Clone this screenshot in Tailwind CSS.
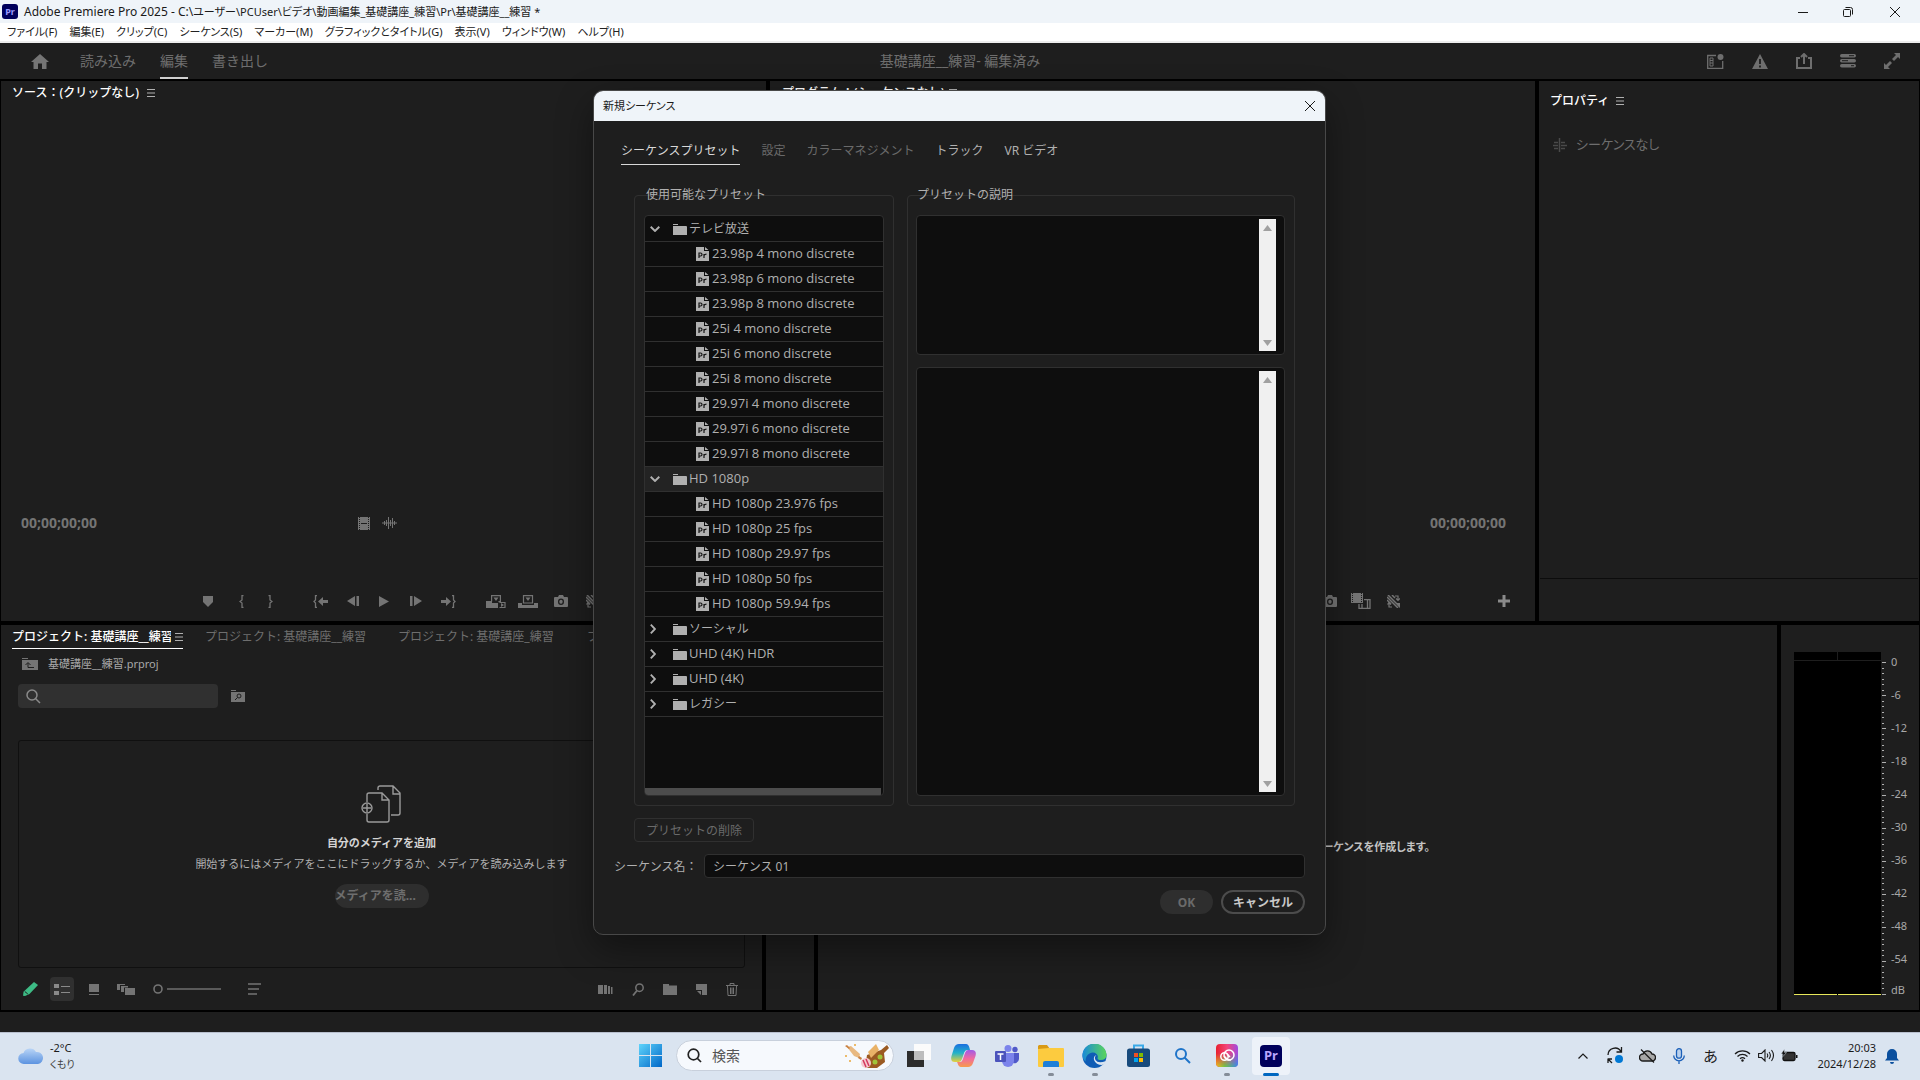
<!DOCTYPE html>
<html lang="ja">
<head>
<meta charset="utf-8">
<title>Adobe Premiere Pro 2025</title>
<script src="https://cdn.jsdelivr.net/npm/@tailwindcss/browser@4"></script>
</head>
<body class="h-screen overflow-hidden bg-[#1e1e1e] font-['Noto_Sans','Noto_Sans_CJK_JP',sans-serif] text-xs text-[#b0b0b0]">
<svg class="hidden">
  <symbol id="burger" viewBox="0 0 8 8"><path d="M0 .5h8M0 4h8M0 7.500h8" stroke="currentColor"/></symbol>
  <symbol id="camera" viewBox="0 0 14 12"><path fill="currentColor" fill-rule="evenodd" d="M1 2h3l1-2h4l1 2h3a1 1 0 0 1 1 1v8a1 1 0 0 1-1 1H1a1 1 0 0 1-1-1V3a1 1 0 0 1 1-1zm6 1.500a3 3.300 0 1 0 0 6.600 3 3.300 0 0 0 0-6.600z"/><ellipse cx="7" cy="6.800" rx="1.700" ry="2" fill="currentColor"/></symbol>
  <symbol id="nofx" viewBox="0 0 13 13"><path d="M0 2l11 11M1 0l12 12M0 5l4 4M5 0l3 3" stroke="currentColor" stroke-width="1.500" fill="none"/><path d="M8 1h3v4M9 3.500l2 2 2-2M5 12H2V8M.5 9.500l1.500-2 2 2" stroke="currentColor" stroke-width="1.200" fill="none"/><path d="M9 8h4v5z" fill="currentColor"/></symbol>
  <symbol id="folder" viewBox="0 0 14 11"><path fill="currentColor" d="M0 0h5v1H0zM0 2h13a1 1 0 0 1 1 1v8H0z"/></symbol>
  <symbol id="prfile" viewBox="0 0 13 14"><path fill="currentColor" d="M0 0h8v4h5v10H0zM9 0l3.500 3H9z"/><path d="M3 11V6h1.500a1.500 1.500 0 0 1 0 3H3M8 11V7M8 8.500q.5-1.300 2.500-1.300" stroke="#151515" stroke-width="1.200" fill="none"/></symbol>
  <symbol id="chevdown" viewBox="0 0 10 6"><path d="M.7.8 5 5 9.300.8" stroke="currentColor" stroke-width="1.900" fill="none"/></symbol>
  <symbol id="chevright" viewBox="0 0 6 10"><path d="M.8.700 5 5 .8 9.300" stroke="currentColor" stroke-width="1.900" fill="none"/></symbol>
</svg>

<div class="relative flex h-full flex-col">
  <!-- Window title -->
  <header class="flex h-[23px] shrink-0 items-center bg-[#eff4f9] text-[#1a1a1a]">
    <span class="ml-[2px] flex h-[15px] w-4 items-center justify-center rounded-[3px] bg-[#00005b] text-[9px] font-bold text-[#9999ff]">Pr</span>
    <h1 class="ml-[6px] whitespace-nowrap text-[11px] [font-feature-settings:'palt']"><span class="text-xs">Adobe Premiere Pro 2025 - C:\</span>ユーザー\PCUser\ビデオ\動画編集_基礎講座_練習\Pr\基礎講座__練習 *</h1>
    <div class="ml-auto flex h-full">
      <button aria-label="最小化" class="flex w-[45px] items-center justify-center"><svg width="10" height="10"><path d="M0 5.500h10" stroke="currentColor"/></svg></button>
      <button aria-label="元に戻す" class="flex w-[45px] items-center justify-center"><svg width="10" height="10" fill="none" stroke="currentColor"><rect x=".5" y="2.500" width="7" height="7" rx="1"/><path d="M2.500 .5h5a2 2 0 0 1 2 2v5"/></svg></button>
      <button aria-label="閉じる" class="flex w-[50px] items-center justify-center"><svg width="10" height="10"><path d="M0 0l10 10M10 0L0 10" stroke="currentColor"/></svg></button>
    </div>
  </header>
  <nav class="flex h-5 shrink-0 items-center gap-3 border-b-2 border-[#ededed] bg-white pl-[7px] pt-px text-[11px] text-[#222] [font-feature-settings:'palt']">
    <button>ファイル(F)</button><button>編集(E)</button><button>クリップ(C)</button><button>シーケンス(S)</button><button>マーカー(M)</button><button>グラフィックとタイトル(G)</button><button>表示(V)</button><button>ウィンドウ(W)</button><button>ヘルプ(H)</button>
  </nav>

  <!-- Workspace bar -->
  <div class="grid h-9 shrink-0 grid-cols-[1fr_auto_1fr] items-stretch text-sm leading-5 text-[#6e6e6e]">
    <div class="flex items-center pl-[31px]">
      <button aria-label="ホーム" class="mr-[31px]"><svg width="18" height="15" class="block"><path fill="#757575" d="M9 0l9 8h-2.500v7H11V9.500H7V15H2.500V8H0z"/></svg></button>
      <button class="mr-6">読み込み</button>
      <button class="mr-6 h-full border-b-2 border-[#d0d0d0] pt-[2px]">編集</button>
      <button>書き出し</button>
    </div>
    <div class="flex items-center">基礎講座__練習- 編集済み</div>
    <div class="flex items-center justify-end gap-7 pr-5">
      <button aria-label="ワークスペース"><svg width="17" height="15" class="block"><path d="M9 1.500H.7v12.800h15V7" stroke="currentColor" stroke-width="1.300" fill="none"/><circle cx="13.500" cy="3" r="3" fill="currentColor"/><path d="M3 4h3v8H3zM3 6.500h3M3 9h3" stroke="currentColor" fill="none"/></svg></button>
      <button aria-label="警告"><svg width="16" height="15" class="block"><path d="M8 0l8 15H0z" fill="currentColor"/><path d="M8 5v5M8 11.500v2" stroke="#1e1e1e" stroke-width="1.800"/></svg></button>
      <button aria-label="書き出し"><svg width="16" height="16" class="block" fill="none" stroke="currentColor" stroke-width="2"><path d="M4 5H1v10h14V5h-3M8 11V1M5 4l3-3 3 3"/></svg></button>
      <button aria-label="進行状況"><svg width="16" height="14" class="block"><rect width="16" height="3.500" rx="1.700" fill="currentColor"/><rect y="5" width="16" height="3.500" rx="1.700" fill="currentColor"/><rect y="10" width="16" height="3.500" rx="1.700" fill="currentColor"/><path d="M9 1.700h5M2 6.700h6M11 11.700h3" stroke="#1e1e1e"/></svg></button>
      <button aria-label="全画面"><svg width="16" height="16" class="block"><path d="M10 0h6v6l-2-2-4 4-2-2 4-4zM0 16v-6l2 2 4-4 2 2-4 4 2 2z" fill="currentColor"/></svg></button>
    </div>
  </div>

  <!-- Panels -->
  <main class="grid min-h-0 flex-1 grid-rows-[540fr_385fr] gap-1 bg-black px-px py-[2px]">
    <div class="grid min-h-0 grid-cols-[765fr_765fr_380fr] gap-1">
      <section class="flex min-w-0 flex-col bg-[#1e1e1e]">
        <h2 class="flex h-6 items-center gap-1 pl-[11px] font-medium text-white"><span class="w-[131px] overflow-hidden whitespace-nowrap">ソース：(クリップなし)</span><svg class="size-2 text-[#b0b0b0]"><use href="#burger"/></svg></h2>
        <div class="mt-auto flex h-6 items-center pl-5 text-[#747474]">
          <span class="w-[337px] text-sm font-bold">00;00;00;00</span>
          <svg width="12" height="13"><path fill="currentColor" d="M0 0h12v13H0z"/><path d="M1.500 0v13M10.500 0v13" stroke="#1e1e1e" stroke-dasharray="1 1"/><path d="M3 6.500h6" stroke="#1e1e1e"/></svg>
          <svg width="15" height="12" class="ml-3"><path d="M0 6h15M2.500 4v4M4.500 3v6M6.500 0v12M8.500 3v6M10.500 1v10M12.500 4v4" stroke="currentColor"/></svg>
        </div>
        <div class="mb-[5px] mt-[51px] flex h-[30px] items-center pl-[202px] text-[#747474]">
          <button aria-label="マーカー" class="mr-[26px]"><svg width="10" height="11" class="block"><path fill="currentColor" d="M0 0h10v6l-5 5-5-5z"/></svg></button>
          <button aria-label="イン" class="mr-6"><svg width="5" height="13" class="block"><path d="M4.500.5H3V5L1 6.500 3 8v4.500h1.500" fill="none" stroke="currentColor" stroke-width="1.300"/></svg></button>
          <button aria-label="アウト" class="mr-10"><svg width="5" height="13" class="block"><path d="M.5.5H2V5l2 1.500L2 8v4.500H.5" fill="none" stroke="currentColor" stroke-width="1.300"/></svg></button>
          <button aria-label="インへ移動" class="mr-[19px]"><svg width="15" height="13" class="block"><path d="M4 .5H2.500V5L1 6.500 2.500 8v4.500H4" fill="none" stroke="currentColor" stroke-width="1.300"/><path d="M5 6.500L10 2v3h5v3h-5v3z" fill="currentColor"/></svg></button>
          <button aria-label="前のフレーム" class="mr-5"><svg width="12" height="10" class="block"><path d="M8 0v10L0 5zM9.500 0H12v10H9.500z" fill="currentColor"/></svg></button>
          <button aria-label="再生" class="mr-[21px]"><svg width="10" height="11" class="block"><path d="M0 0l10 5.500L0 11z" fill="currentColor"/></svg></button>
          <button aria-label="次のフレーム" class="mr-[19px]"><svg width="12" height="10" class="block"><path d="M0 0h2.500v10H0zM4 0l8 5-8 5z" fill="currentColor"/></svg></button>
          <button aria-label="アウトへ移動" class="mr-[30px]"><svg width="15" height="13" class="block"><path d="M11 .5h1.500V5L14 6.500 12.500 8v4.500H11" fill="none" stroke="currentColor" stroke-width="1.300"/><path d="M10 6.500L5 2v3H0v3h5v3z" fill="currentColor"/></svg></button>
          <button aria-label="インサート" class="mr-3"><svg width="20" height="13" class="block"><path d="M0 6h6v2h6v5H0z" fill="currentColor"/><path d="M5.600 6.500V.6h8.800v6h-2" fill="none" stroke="currentColor" stroke-width="1.200"/><path d="M7.500 2.500h5L10 6z" fill="currentColor"/><path d="M13.500 7.500H19v5h-5.500" fill="none" stroke="currentColor" stroke-width="1.200"/><path d="M15 8v4l3-2z" fill="currentColor"/></svg></button>
          <button aria-label="上書き" class="mr-4"><svg width="20" height="13" class="block"><path d="M0 8h4v2h12V8h4v5H0z" fill="currentColor"/><path d="M5.500 8V.6h9V8z" fill="none" stroke="currentColor" stroke-width="1.200"/><path d="M7.500 2.500h5L10 6z" fill="currentColor"/></svg></button>
          <button aria-label="フレームを書き出し" class="mr-[18px]"><svg class="block h-3 w-[14px]"><use href="#camera"/></svg></button>
          <button aria-label="プロキシ"><svg class="block size-[13px]"><use href="#nofx"/></svg></button>
        </div>
      </section>
      <section class="flex min-w-0 flex-col bg-[#1e1e1e]">
        <h2 class="flex h-6 items-center gap-1 pl-3 font-medium text-white">プログラム：(シーケンスなし)<svg class="size-2 text-[#b0b0b0]"><use href="#burger"/></svg></h2>
        <div class="mt-auto flex h-6 items-center justify-end pr-[29px] text-sm font-bold text-[#747474]">00;00;00;00</div>
        <div class="mb-[5px] mt-[51px] flex h-[30px] items-center justify-end pr-[25px] text-[#747474]">
          <button aria-label="フレームを書き出し" class="mr-[14px]"><svg class="block h-3 w-[14px]"><use href="#camera"/></svg></button>
          <button aria-label="比較表示" class="mr-4"><svg width="20" height="16" class="block"><path d="M0 0h12v10H0z" fill="currentColor"/><path d="M1.500 0v10M10.500 0v10" stroke="#1e1e1e" stroke-dasharray="1 1"/><path d="M8 11v4.300h11V6.700h-6M11 11v4M16.500 7v8" fill="none" stroke="currentColor" stroke-width="1.300"/></svg></button>
          <button aria-label="プロキシ" class="mr-[98px]"><svg class="block size-[13px]"><use href="#nofx"/></svg></button>
          <button aria-label="ボタンエディター"><svg width="12" height="12" class="block"><path d="M6 0v12M0 6h12" stroke="#8a8a8a" stroke-width="3"/></svg></button>
        </div>
      </section>
      <section class="flex min-w-0 flex-col bg-[#1e1e1e]">
        <h2 class="mt-2 flex h-6 items-center gap-[7px] pl-[11px] font-medium text-white">プロパティ<svg class="size-2 text-[#b0b0b0]"><use href="#burger"/></svg></h2>
        <p class="mt-5 flex h-6 items-center gap-[9px] pl-[14px] text-[#6e6e6e]"><svg width="14" height="14" stroke="#4a4a4a" fill="none"><path d="M6.500 0v14M1 4.500h4M0 7.500h5M1 10.500h4M8 4.500h4M8 7.500h6M8 10.500h4" stroke-width="1.500"/></svg><span class="text-[13px] [font-feature-settings:'palt']">シーケンスなし</span></p>
        <div class="mx-px mb-[42px] mt-auto border-t border-[#0c0c0c]"></div>
      </section>
    </div>

    <div class="grid min-h-0 grid-cols-[761fr_48px_959fr_138px] gap-1">
      <section class="flex min-w-0 flex-col overflow-hidden bg-[#1e1e1e]">
        <div class="flex h-6 shrink-0 items-stretch whitespace-nowrap pl-[11px] text-[#6e6e6e]">
          <button class="mr-[22px] flex w-[171px] items-center gap-1 border-b border-white font-medium text-white"><span class="w-[159px] overflow-hidden text-left">プロジェクト: 基礎講座__練習</span><svg class="size-2 shrink-0 text-[#b0b0b0]"><use href="#burger"/></svg></button>
          <button class="w-[193px] shrink-0 text-left">プロジェクト: 基礎講座__練習</button>
          <button class="w-[189px] shrink-0 text-left">プロジェクト: 基礎講座_練習</button>
          <button class="shrink-0">プ</button>
        </div>
        <div class="mt-[6px] flex h-[18px] shrink-0 items-center gap-[10px] pl-[21px] text-[11px] text-[#a8a8a8]"><svg width="16" height="12"><path fill="#747474" d="M0 0h6v1H0zM0 2h16v10H0z"/><path d="M12 9.500H6V5M3.500 7L6 4.500 8.500 7" stroke="#1e1e1e" fill="none"/></svg><span>基礎講座__練習.prproj</span></div>
        <div class="mt-[11px] flex h-6 shrink-0 items-center pl-[17px]">
          <label class="flex h-6 w-[200px] items-center rounded bg-[#303030] pl-2"><svg width="15" height="15" fill="none" stroke="#8a8a8a" stroke-width="1.500"><circle cx="6" cy="6" r="5"/><path d="M9.500 9.500L14 14"/></svg><input aria-label="検索" class="w-40 bg-transparent outline-none"></label>
          <button aria-label="ビンを検索" class="ml-[13px]"><svg width="14" height="12" class="block"><path fill="#747474" d="M0 0h5v1H0zM0 2h14v10H0z"/><circle cx="8" cy="6" r="2" fill="none" stroke="#1e1e1e"/><path d="M6.500 7.500L4 10" stroke="#1e1e1e"/></svg></button>
        </div>
        <div class="mx-[17px] mt-8 flex min-h-0 flex-1 flex-col items-center rounded-[3px] border border-[#101010] pt-11">
          <svg width="42" height="38" fill="none" stroke="#9a9a9a" stroke-width="1.400"><path d="M6 17V10a2 2 0 0 1 2-2h13l7 7v20a2 2 0 0 1-2 2H8a2 2 0 0 1-2-2v-6M21 8v7h7M17 5V3a2 2 0 0 1 2-2h13l7 7v20a2 2 0 0 1-2 2h-7M32 1v8h7"/><circle cx="6" cy="23" r="5"/><path d="M2 23h8M6 19v8"/></svg>
          <h3 class="mt-3 text-[11px] font-bold leading-4 text-[#d4d4d4]">自分のメディアを追加</h3>
          <p class="mt-[5px] whitespace-nowrap text-[11px] leading-4 text-[#b0b0b0]">開始するにはメディアをここにドラッグするか、メディアを読み込みします</p>
          <button class="mt-3 flex h-6 w-[94px] items-center rounded-full bg-[#2e2e2e] font-bold text-[#6e6e6e]">メディアを読...</button>
        </div>
        <div class="flex h-[42px] shrink-0 items-center pl-[22px] pr-6 text-[#747474]">
          <svg width="15" height="14" class="mr-3"><path fill="#3dbb85" d="M11 0l4 3-8.500 9L2 14l-2-.3.500-4z"/><path d="M1.800 9.500l3 2.500" stroke="#1e1e1e"/></svg>
          <button aria-label="リスト表示" class="mr-[15px] flex h-6 w-6 items-center justify-center rounded bg-[#303030]"><svg width="16" height="11"><path fill="#8a8a8a" d="M0 0h5v4H0zM0 7h5v4H0zM7 2h9v1H7zM7 8h9v1H7z"/></svg></button>
          <button aria-label="アイコン表示" class="mr-[18px]"><svg width="10" height="11" class="block"><path fill="currentColor" d="M0 0h10v8H0zM0 10h10v1H0z"/></svg></button>
          <button aria-label="フリーフォーム表示" class="mr-[18px]"><svg width="18" height="11" class="block"><path fill="currentColor" d="M0 0h8v1H3v5H0zM4 2h7v1.500H7V8H4zM8 4h10v7H8z"/></svg></button>
          <svg width="68" height="12" class="mr-[27px]" fill="none" stroke="currentColor"><circle cx="5" cy="6" r="4" stroke-width="1.600"/><path d="M14 6h54" stroke="#5a5a5a" stroke-width="2"/></svg>
          <button aria-label="並べ替え"><svg width="13" height="12" class="block"><path d="M0 1h13M0 6h11M0 11h9" stroke="currentColor" stroke-width="1.500"/></svg></button>
          <div class="ml-auto flex items-center gap-[19px]">
            <button aria-label="自動シーケンス"><svg width="15" height="9" class="block"><path fill="currentColor" d="M0 0h5v9H0zM6 0h3v9H6zM10 1h2v8h-2zM13 2h1.500v7H13z"/></svg></button>
            <button aria-label="検索"><svg width="12" height="13" class="block"><circle cx="7.500" cy="4.700" r="3.700" fill="none" stroke="currentColor" stroke-width="1.500"/><path d="M5 7.500L1 12.500" stroke="currentColor" stroke-width="1.800"/></svg></button>
            <button aria-label="新規ビン"><svg width="14" height="11" class="block"><path fill="currentColor" d="M0 0h6v1.500h8V11H0z"/></svg></button>
            <button aria-label="新規項目"><svg width="11" height="11" class="block"><path fill="currentColor" d="M0 0h11v11H6V6H0zM1 7h4v4z"/></svg></button>
            <button aria-label="消去"><svg width="12" height="13" class="block"><path d="M0 2.500h12M4 2V.5h4V2M1.500 3l.500 9.500h8l.500-9.500M4.500 4.500v6.500M6 4.500v6.500M7.500 4.500v6.500" fill="none" stroke="currentColor"/></svg></button>
          </div>
        </div>
      </section>
      <section class="bg-[#1e1e1e]"></section>
      <section class="flex min-w-0 items-center justify-center bg-[#1e1e1e] pl-[5px] pt-[60px] text-[11px] font-bold text-[#c4c4c4]"><p class="[font-feature-settings:'palt']">ここにメディアをドロップして、シーケンスを作成します。</p></section>
      <section class="flex min-w-0 bg-[#1e1e1e] pb-[15px] pl-[13px] pt-[27px] text-[11px] text-[#a8a8a8]">
        <div class="grid w-[87px] shrink-0 grid-cols-2 grid-rows-[8px_1fr] gap-px">
          <div class="bg-black"></div><div class="bg-black"></div>
          <div class="col-span-2 grid grid-cols-2 gap-x-px bg-black"><i class="self-end border-b border-[#e8e85a]"></i><i class="self-end border-b border-[#e8e85a]"></i></div>
        </div>
        <svg id="ticks" width="5" height="343" class="ml-px shrink-0" stroke="#b0b0b0"></svg>
        <ol id="levels" class="ml-1 flex flex-col"></ol>
      </section>
    </div>
  </main>
  <div class="h-5 shrink-0"></div>

  <!-- Taskbar -->
  <footer class="relative flex h-12 shrink-0 items-center border-t border-[#b8bfce] bg-[#dae4f0] pb-[2px] text-[#1b1b1b]">
    <button class="flex items-center gap-[6px] pl-[18px] text-left"><svg width="26" height="18"><defs><linearGradient id="cl" x2="0" y2="1"><stop stop-color="#b8d4f6"/><stop offset="1" stop-color="#5c93e0"/></linearGradient></defs><path fill="url(#cl)" d="M6 17a5.500 5.500 0 0 1-.5-11A7 7 0 0 1 18 5a6 6 0 0 1 2 12z"/></svg><span class="text-[11px] leading-4">-2°C<br><span class="text-[10px] text-[#444] [font-feature-settings:'palt']">くもり</span></span></button>
    <div class="absolute inset-x-0 mx-auto flex w-[664px] items-center pl-[11px]">
      <button aria-label="スタート" class="mr-[14px]"><svg width="23" height="23" class="block"><defs><linearGradient id="wn" x2="1" y2="1"><stop stop-color="#5fd4fb"/><stop offset="1" stop-color="#0067c8"/></linearGradient></defs><path fill="url(#wn)" d="M0 0h11v11H0zM12 0h11v11H12zM0 12h11v11H0zM12 12h11v11H12z"/></svg></button>
      <label class="flex h-[31px] w-[218px] items-center rounded-full border border-[#c8d0dc] bg-[#f6f9fd] pl-[10px]">
        <svg width="15" height="15" fill="none" stroke="#222" stroke-width="1.700"><circle cx="6.500" cy="6.500" r="5.300"/><path d="M10.500 10.500L14 14"/></svg>
        <input aria-label="検索" placeholder="検索" class="ml-[10px] w-[120px] bg-transparent text-sm outline-none placeholder:text-[#555]">
        <svg width="44" height="26" class="ml-auto mr-1"><path fill="#9a5a22" d="M22 12l14-5 6-5 2 3-5 5 1 9-8 6H20z"/><path fill="#e9b267" d="M23 9l8-8 3 6-8 8z"/><path fill="#e8b982" d="M2 4l4-1 9 8-1 4-5-2z"/><path fill="#c98142" d="M0 3l2-1 3 3-1 1zM14 13l3 2-1 2-3-2z"/><circle cx="21" cy="20" r="5" fill="#f4c9cf"/><path d="M18 17l3 7M21 16l3 7" stroke="#d4385c" stroke-width="1.500"/><circle cx="30" cy="19" r="2.500" fill="#9fc43a"/><circle cx="35" cy="14" r="2.500" fill="#9fc43a"/><circle cx="10" cy="2" r="1" fill="#e9a63b"/><circle cx="5" cy="18" r="1" fill="#e9a63b"/><circle cx="1" cy="13" r="1" fill="#e9a63b"/></svg>
      </label>
      <button aria-label="タスクビュー" class="ml-[13px]"><svg width="24" height="24" class="block"><path fill="#2c2c2c" d="M0 7h17v16H0z"/><path fill="#fbfbfb" d="M7 0h17v16H7z"/><path fill="#bdbdbd" d="M7 7h10v9H7z"/></svg></button>
      <button aria-label="Copilot" class="ml-5"><svg width="25" height="23" class="block"><defs><linearGradient id="ca" x2="0" y2="1"><stop stop-color="#1a6fe0"/><stop offset=".5" stop-color="#22b2c8"/><stop offset="1" stop-color="#e8cf3a"/></linearGradient><linearGradient id="cb" x2="0" y2="1"><stop stop-color="#a05ae8"/><stop offset=".5" stop-color="#f06aa0"/><stop offset="1" stop-color="#f79a4a"/></linearGradient></defs><path fill="url(#ca)" d="M8 0h7q2.500 0 3.500 4l.500 2h-3q-2 0-2.800 2.500L11 15q-1 3-3 3H4q-5 0-3.500-6L3 4q1.300-4 5-4z"/><path fill="url(#cb)" d="M17 23h-7q-2.500 0-3.500-4l-.500-1h3q2 0 2.800-2.500L14 9q1-3 3-3h4q5 0 3.500 6L22 19q-1.300 4-5 4z"/></svg></button>
      <button aria-label="Teams" class="ml-[19px]"><svg width="24" height="22" class="block"><circle cx="20" cy="4.500" r="2.700" fill="#5059c9"/><circle cx="13" cy="3.500" r="3.500" fill="#7b83eb"/><path fill="#5059c9" d="M16 8h8v6a4.500 4.500 0 0 1-7 3.500z"/><path fill="#7b83eb" d="M7 8h12v8a6 6 0 0 1-12 0z"/><rect y="6" width="11" height="11" rx="1" fill="#4b53bc"/><path d="M2.500 9h6M5.500 9v6" stroke="#fff" stroke-width="1.500"/></svg></button>
      <button aria-label="エクスプローラー" class="ml-[19px]"><svg width="26" height="22" class="block"><path fill="#d99a16" d="M1 0h8l3 4H0V1z"/><path fill="#fccb3f" d="M0 4l11-1h14a1 1 0 0 1 1 1v17a1 1 0 0 1-1 1H1a1 1 0 0 1-1-1z"/><path fill="#1d7fd8" d="M5 22v-4a2 2 0 0 1 2-2h12a2 2 0 0 1 2 2v4z"/></svg></button>
      <button aria-label="Edge" class="ml-[18px]"><svg width="25" height="24" class="block"><defs><linearGradient id="ed" x2="1"><stop stop-color="#1a8ad8"/><stop offset="1" stop-color="#5ad65a"/></linearGradient></defs><circle cx="12.500" cy="12" r="12" fill="#0f5cb5"/><path fill="url(#ed)" d="M.5 12a12 12 0 0 1 24-1q0 5-6 5-3 0-3-2 1-2-1-4-3-2.500-7-.500-4 2-4 8Q.5 15 .5 12z"/><path fill="#dae4f0" d="M14.500 11q-2.500 2-1 5 2.500 4 10.500 1-1 3-4 4-6 0-8-5-.8-4 2.500-5z"/></svg></button>
      <button aria-label="Store" class="ml-5"><svg width="23" height="23" class="block"><path d="M7 5V1.500h9V5" fill="none" stroke="#3aa9e8" stroke-width="2"/><rect y="4.500" width="23" height="18.500" rx="2.500" fill="#174a7c"/><path fill="#f05022" d="M7 9h4v4H7z"/><path fill="#7fba00" d="M12 9h4v4h-4z"/><path fill="#00a4ef" d="M7 14h4v4H7z"/><path fill="#ffb900" d="M12 14h4v4h-4z"/></svg></button>
      <button aria-label="検索アプリ" class="ml-6"><svg width="17" height="17" class="block" fill="none" stroke="#1f74c9" stroke-width="2"><circle cx="7" cy="7" r="5"/><path d="M10.500 10.500L16 16"/></svg></button>
      <button aria-label="Creative Cloud" class="ml-[25px]"><svg width="22" height="23" class="block"><defs><linearGradient id="cc1"><stop stop-color="#e8202f"/><stop offset=".5" stop-color="#f2457a"/><stop offset="1" stop-color="#a04ae0"/></linearGradient><linearGradient id="cc2"><stop stop-color="#f6c21c"/><stop offset=".4" stop-color="#6cc644"/><stop offset="1" stop-color="#2f8cf0"/></linearGradient><linearGradient id="cc3" x2="0" y2="1"><stop offset=".4" stop-color="#fff" stop-opacity="0"/><stop offset="1" stop-color="#fff"/></linearGradient><mask id="ccm"><rect width="22" height="23" fill="url(#cc3)"/></mask></defs><rect width="22" height="23" rx="4" fill="url(#cc1)"/><rect width="22" height="23" rx="4" fill="url(#cc2)" mask="url(#ccm)"/><g fill="none" stroke="#fff" stroke-width="1.500"><circle cx="13" cy="11" r="5"/><circle cx="8.500" cy="12.500" r="3.700"/><path d="M8 12l4 4h3M11 10l3 3"/></g></svg></button>
      <button aria-label="Premiere Pro" class="ml-[14px] flex h-[38px] w-[38px] shrink-0 items-center justify-center rounded bg-[#edf2f9]"><span class="flex h-[22px] w-[22px] items-center justify-center rounded bg-[#00005b] text-[13px] font-bold leading-none text-[#b9a6ff]">Pr</span></button>
    </div>
    <div class="absolute inset-x-0 bottom-1 mx-auto w-[664px]">
      <i class="absolute bottom-0 left-[420px] h-[3px] w-[6px] rounded-full bg-[#848c98]"></i>
      <i class="absolute bottom-0 left-[464px] h-[3px] w-[6px] rounded-full bg-[#848c98]"></i>
      <i class="absolute bottom-0 left-[596px] h-[3px] w-[6px] rounded-full bg-[#848c98]"></i>
      <i class="absolute bottom-0 left-[635px] h-[3px] w-4 rounded-full bg-[#0067c0]"></i>
    </div>
    <div class="ml-auto flex items-center pr-[21px]">
      <svg width="10" height="6" class="mr-[19px]" fill="none" stroke="currentColor" stroke-width="1.200"><path d="M.5 5.500L5 1l4.500 4.500"/></svg>
      <svg width="17" height="17" class="mr-[15px]" fill="none" stroke="currentColor" stroke-width="1.300"><path d="M1 8a7 7 0 0 1 13-3.500M14.500 0v5h-5M1 12h4M1 11.500V16M1 12l4 4"/><circle cx="12" cy="12" r="4" fill="#0078d4" stroke="none"/></svg>
      <svg width="17" height="14" class="mr-[17px]" fill="#a8a8a8" stroke="currentColor" stroke-width="1.300"><path d="M4 12a3.500 3.500 0 0 1 0-7 4.800 4.800 0 0 1 9 0 3.500 3.500 0 0 1 0 7z"/><path d="M2 .5l13 13"/></svg>
      <svg width="12" height="16" class="mr-[18px]" fill="none" stroke="#1a5fb8" stroke-width="1.300"><rect x="3.500" y=".7" width="5" height="9.500" rx="2.500" fill="#b9d0ec"/><path d="M.7 7.500a5.300 5.300 0 0 0 10.600 0M6 13v3"/></svg>
      <span class="mr-4 text-[15px]">あ</span>
      <svg width="17" height="13" class="mr-[7px]" fill="none" stroke="currentColor" stroke-width="1.200"><path d="M1 5a10.500 10.500 0 0 1 15 0M3.500 7.500a7 7 0 0 1 10 0M6 9.800a3.600 3.600 0 0 1 5 0"/><circle cx="8.500" cy="11.500" r="1.200" fill="currentColor" stroke="none"/></svg>
      <svg width="17" height="13" class="mr-[6px]" fill="none" stroke="currentColor" stroke-width="1.100"><path d="M.6 4.500h3L7 1v11L3.600 8.500h-3zM9 4.500q1.500 2 0 4M11 3q2.800 3.500 0 7M13.500 1q4 5.500 0 11"/></svg>
      <svg width="17" height="14" class="mr-[6px]"><rect x="2" y="3.500" width="12" height="8" rx="1.500" fill="#333" stroke="#111" stroke-width="1.300"/><path d="M15 6h1.500v3H15z" fill="#111"/><path d="M3.500 0L0 5h2L1 8.500 5.500 3.500h-2z" fill="#111" stroke="#dae4f0" stroke-width=".5"/></svg>
      <span class="w-[72px] text-right text-[11px] leading-4">20:03<br>2024/12/28</span>
      <svg width="14" height="16" class="ml-[9px]"><path fill="#0a4f9e" d="M2 6a5 5 0 0 1 10 0v4l2 2.500H0L2 10zM5 14h4a2 2 0 0 1-4 0z"/></svg>
    </div>
  </footer>

  <!-- New sequence dialog -->
  <section role="dialog" aria-labelledby="dlg" class="absolute left-[calc(50%-367px)] top-[90px] w-[733px] overflow-hidden rounded-[10px] border border-[#484848] bg-[#1e1e1e] shadow-[0_14px_36px_rgba(0,0,0,0.4)]">
    <div class="flex h-[30px] items-center bg-[#eff4f9] pl-[9px] pr-[10px] text-[#1a1a1a]">
      <h2 id="dlg" class="text-[11px] [font-feature-settings:'palt']">新規シーケンス</h2>
      <button aria-label="閉じる" class="ml-auto"><svg width="10" height="10" class="block"><path d="M0 0l10 10M10 0L0 10" stroke="currentColor"/></svg></button>
    </div>
    <nav class="flex items-start gap-[21px] pl-[27px] pt-[21px] leading-[18px]">
      <button class="border-b border-[#d8d8d8] pb-1 text-[#d8d8d8]">シーケンスプリセット</button>
      <button disabled class="text-[#6a6a6a]">設定</button>
      <button disabled class="text-[#6a6a6a]">カラーマネジメント</button>
      <button>トラック</button>
      <button>VR ビデオ</button>
    </nav>
    <div class="mt-[30px] flex gap-[13px] pl-10 pr-[30px]">
      <section class="flex w-[260px] flex-col rounded border border-[#303030] px-[9px] pb-[9px]">
        <h3 class="-mt-[10px] h-[18px] pl-[2px] leading-[18px]">使用可能なプリセット</h3>
        <div class="mt-[11px] flex h-[581px] flex-col overflow-hidden rounded border border-[#303030] bg-[#0e0e0e]">
          <ul id="presets" role="tree" class="pt-px"></ul>
          <div class="mr-[2px] mt-auto h-[7px] bg-[#4c4c4c]"></div>
        </div>
      </section>
      <section class="flex flex-1 flex-col rounded border border-[#303030] pb-[9px] pl-2 pr-[9px]">
        <h3 class="-mt-[10px] h-[18px] pl-px leading-[18px]">プリセットの説明</h3>
        <div class="mt-[11px] flex h-[140px] justify-end rounded border border-[#303030] bg-[#0e0e0e] py-[3px] pr-2">
          <div class="flex w-[17px] flex-col items-center justify-between bg-[#f0f0f0] pb-[5px] pt-[6px] text-[#a0a0a0]"><svg width="9" height="6"><path d="M4.500 0L9 6H0z" fill="currentColor"/></svg><svg width="9" height="6"><path d="M0 0h9L4.500 6z" fill="currentColor"/></svg></div>
        </div>
        <div class="mt-3 flex flex-1 justify-end rounded border border-[#303030] bg-[#0e0e0e] py-[3px] pr-2">
          <div class="flex w-[17px] flex-col items-center justify-between bg-[#f0f0f0] pb-[5px] pt-[6px] text-[#a0a0a0]"><svg width="9" height="6"><path d="M4.500 0L9 6H0z" fill="currentColor"/></svg><svg width="9" height="6"><path d="M0 0h9L4.500 6z" fill="currentColor"/></svg></div>
        </div>
      </section>
    </div>
    <button disabled class="ml-10 mt-3 block h-6 w-[120px] rounded border border-[#303030] pt-px text-[#6a6a6a]">プリセットの削除</button>
    <div class="mt-3 flex h-6 items-center pl-5 pr-5">
      <label for="seq" class="w-[90px] whitespace-nowrap pt-[2px]">シーケンス名：</label>
      <input id="seq" value="シーケンス 01" class="h-6 min-w-0 flex-1 rounded border border-[#303030] bg-[#0e0e0e] px-2 outline-none">
    </div>
    <div class="mb-5 mt-3 flex justify-end gap-2 pr-5 font-bold">
      <button disabled class="h-6 w-[53px] rounded-full bg-[#2e2e2e] pt-px text-[#6a6a6a]">OK</button>
      <button class="h-6 w-[84px] rounded-full border-2 border-[#4c4c4c] pt-px text-[#c8c8c8]">キャンセル</button>
    </div>
  </section>
</div>

<script>
  const tree = [
    ['テレビ放送', ['23.98p 4 mono discrete', '23.98p 6 mono discrete', '23.98p 8 mono discrete', '25i 4 mono discrete', '25i 6 mono discrete', '25i 8 mono discrete', '29.97i 4 mono discrete', '29.97i 6 mono discrete', '29.97i 8 mono discrete']],
    ['HD 1080p', ['HD 1080p 23.976 fps', 'HD 1080p 25 fps', 'HD 1080p 29.97 fps', 'HD 1080p 50 fps', 'HD 1080p 59.94 fps']],
    ['ソーシャル', []], ['UHD (4K) HDR', []], ['UHD (4K)', []], ['レガシー', []]
  ];
  document.getElementById('presets').innerHTML = tree.map(([name, items]) => {
    const chev = items.length
      ? '<svg class="mr-[13px] h-[6px] w-[10px]"><use href="#chevdown"/></svg>'
      : '<svg class="mr-[17px] h-[10px] w-[6px]"><use href="#chevright"/></svg>';
    const bg = name === 'HD 1080p' ? 'bg-[#232323]' : '';
    const face = /^[A-Z]/.test(name) ? "font-['Open_Sans',sans-serif] text-[13px]" : 'text-xs';
    return `<li role="treeitem" class="flex h-[25px] items-center border-b border-[#303030] pl-[5px] ${bg}">${chev}<svg class="mr-[2px] h-[11px] w-[14px]"><use href="#folder"/></svg><span class="${face}">${name}</span></li>` +
      items.map(t => `<li role="treeitem" class="flex h-[25px] items-center border-b border-[#303030] pl-[51px] font-['Open_Sans',sans-serif] text-[13px]"><svg class="mr-[3px] h-[14px] w-[13px]"><use href="#prfile"/></svg>${t}</li>`).join('');
  }).join('');

  let d = '';
  for (let i = 0; i <= 60; i++) d += `M0 ${Math.round(10 + i * 5.53) + 0.5}h${i % 6 ? 2 : 4}`;
  document.getElementById('ticks').innerHTML = `<path d="${d}"/>`;
  document.getElementById('levels').innerHTML = ['0', '-6', '-12', '-18', '-24', '-30', '-36', '-42', '-48', '-54', 'dB']
    .map(t => `<li class="h-[33px] leading-5 last:h-[13px] last:leading-4">${t}</li>`).join('');
</script>
</body>
</html>
